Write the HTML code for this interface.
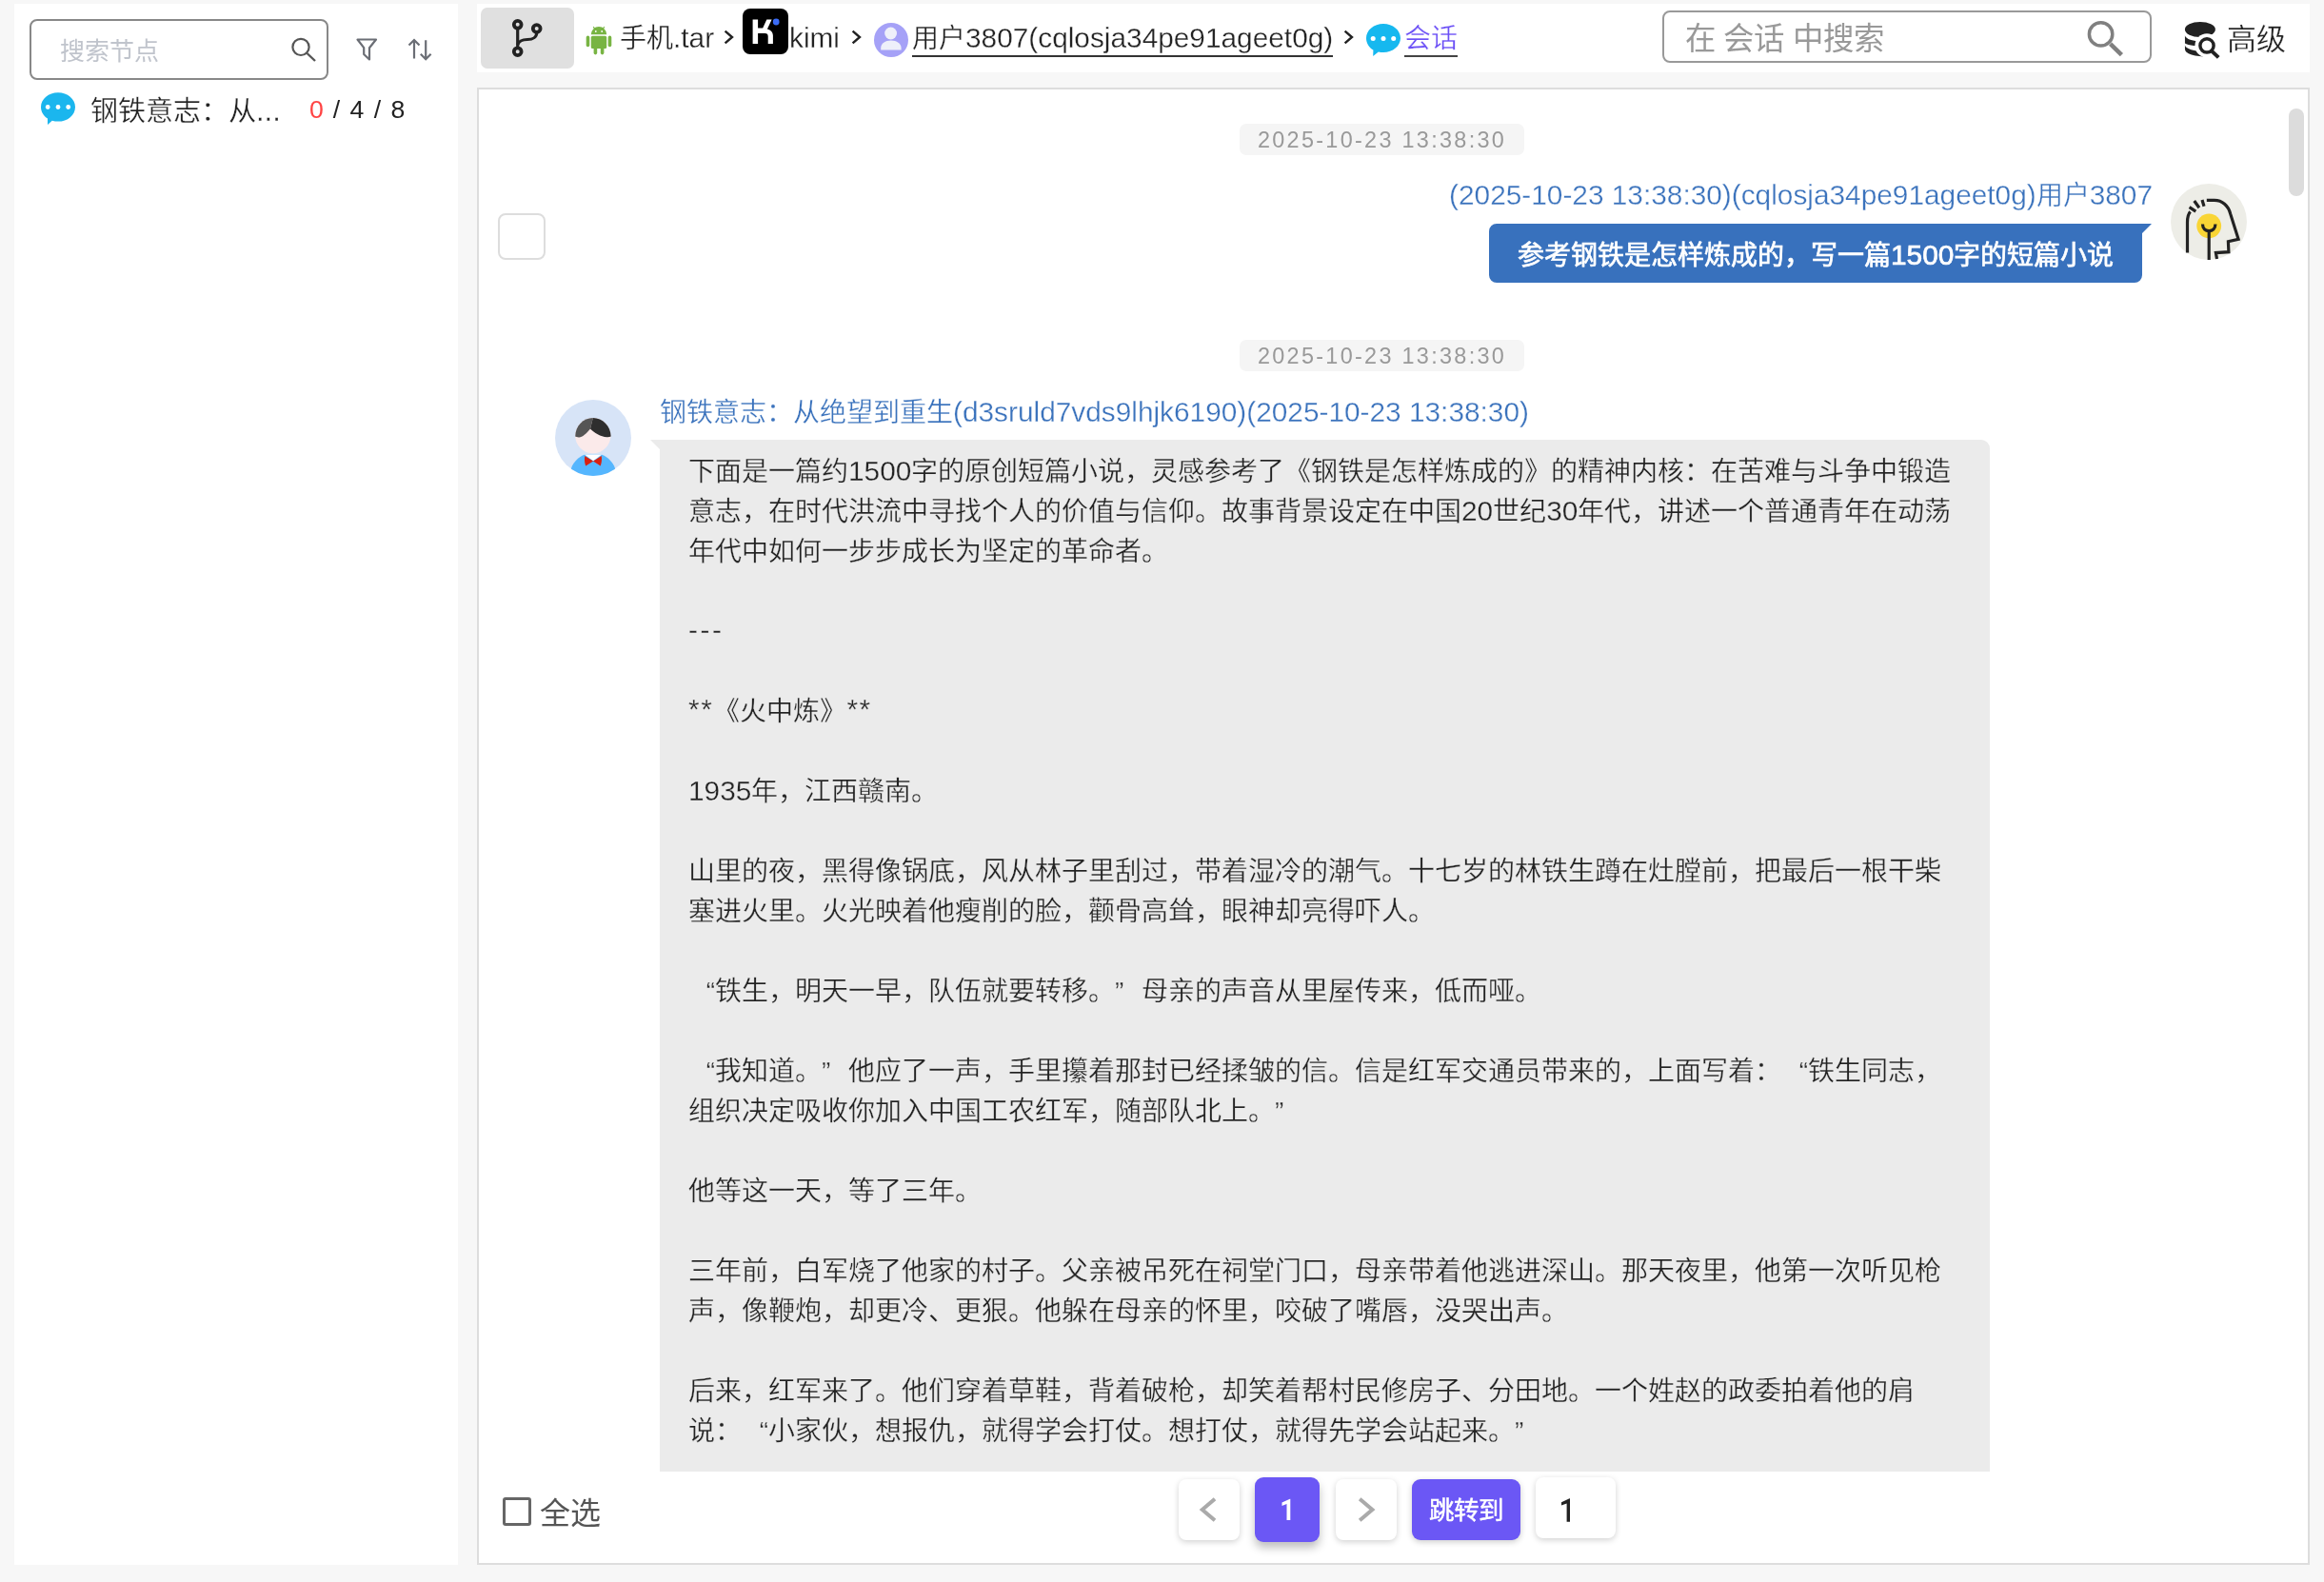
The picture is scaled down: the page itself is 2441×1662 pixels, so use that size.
<!DOCTYPE html>
<html lang="zh-CN">
<head>
<meta charset="utf-8">
<style>
*{box-sizing:border-box;margin:0;padding:0}
html,body{width:2441px;height:1662px;overflow:hidden}
body{will-change:transform}
body{background:#f7f7f7;font-family:"Liberation Sans",sans-serif;color:#222;position:relative}
.L{font-size:1.065em;line-height:0}
.P{font-size:1.065em;line-height:0}
.lq,.rq{display:inline-block;width:28px}.lq{text-align:right}.rq{text-align:left}
.a{position:absolute}
svg{display:block}
#left{left:15px;top:4px;width:466px;height:1640px;background:#fff}
#hdr{left:501px;top:4px;width:1925px;height:72px;background:#fff}
#chat{left:501px;top:92px;width:1925px;height:1552px;background:#fff;border:2px solid #ddd}
.sbox{left:31px;top:20px;width:314px;height:64px;border:2px solid #888;border-radius:8px;background:#fff}
.ph{color:#c0c4cc;font-size:26px;white-space:nowrap;line-height:30px}
.crumb{font-size:28px;white-space:nowrap;line-height:36px;color:#222;top:23px;-webkit-text-stroke:0.3px #fff}
.ts{left:1302px;width:299px;height:33px;background:#f5f5f5;border-radius:7px;color:#999;font-size:22px;letter-spacing:2.3px;text-align:center;line-height:35px;white-space:nowrap}
.blue{color:#3a72bc;-webkit-text-stroke:0.3px #fff}
.msg{font-size:28px;line-height:42px;white-space:pre;color:#222;-webkit-text-stroke:0.3px #ebebeb}
.pg{background:#fff;border-radius:8px;box-shadow:0 2px 6px rgba(0,0,0,.18)}
</style>
</head>
<body>
<!-- LEFT PANEL -->
<div id="left" class="a"></div>
<div class="a sbox"></div>
<div class="a ph" style="left:63px;top:39px">搜索节点</div>
<svg class="a" style="left:300px;top:34px" width="40" height="40" viewBox="0 0 40 40">
  <circle cx="16" cy="15.4" r="8.6" fill="none" stroke="#555" stroke-width="2.2"/>
  <line x1="22.5" y1="22" x2="31" y2="30" stroke="#555" stroke-width="2.4"/>
</svg>
<svg class="a" style="left:370px;top:36px" width="30" height="32" viewBox="0 0 30 32">
  <path d="M5.5 5.5 H25 L18 14.2 V26.5 L12.2 21 V14.2 Z" fill="none" stroke="#6b6e75" stroke-width="2.2" stroke-linejoin="round"/>
</svg>
<svg class="a" style="left:424px;top:36px" width="34" height="32" viewBox="0 0 34 32">
  <path d="M11 25.6 V6.2 M5.5 11.5 L11 6 L16.5 11.5" fill="none" stroke="#6b6e75" stroke-width="2.2"/>
  <path d="M23.2 6.3 V26.2 M17.8 20.8 L23.2 26.3 L28.6 20.8" fill="none" stroke="#6b6e75" stroke-width="2.2"/>
</svg>
<svg class="a" style="left:43px;top:97px" width="36" height="35" viewBox="0 0 36 35">
  <path d="M18 0.2 C28 0.2 36 6.9 36 15.4 C36 23.9 28 30.6 18 30.6 C15.8 30.6 13.8 30.3 11.8 29.7 L7 34 L7 27.5 C2.7 24.7 0 20.3 0 15.4 C0 6.9 8 0.2 18 0.2 Z" fill="#1bb6ee"/>
  <circle cx="7.2" cy="15.5" r="2.4" fill="#fff"/><circle cx="18" cy="15.5" r="2.4" fill="#fff"/><circle cx="28.7" cy="15.5" r="2.4" fill="#fff"/>
</svg>
<div class="a" style="left:95px;top:99px;font-size:29px;line-height:36px;white-space:nowrap;color:#222;-webkit-text-stroke:0.3px #fff">钢铁意志：从<span class="L">...</span></div>
<div class="a" style="left:325px;top:97px;font-size:25px;line-height:36px;word-spacing:3px;white-space:nowrap;color:#222"><span style="color:#f44"><span class="L">0</span></span> <span class="L">/ 4 / 8</span></div>

<!-- HEADER -->
<div id="hdr" class="a"></div>
<div class="a" style="left:505px;top:8px;width:98px;height:64px;background:#e0e0e0;border-radius:7px"></div>
<svg class="a" style="left:505px;top:8px" width="98" height="64" viewBox="0 0 98 64">
  <g fill="none" stroke="#222" stroke-width="3.2">
  <circle cx="38.7" cy="17.8" r="3.9" stroke-width="3.8"/><circle cx="58.7" cy="22" r="3.9" stroke-width="3.8"/><circle cx="38.7" cy="46.2" r="3.9" stroke-width="3.8"/>
  <path d="M38.7 22.2 V41.8"/>
  <path d="M38.7 39 C40 35 44 33.5 49 33.5 C55 33.5 58.7 30.5 58.7 26.4"/>
  </g>
</svg>

<svg class="a" style="left:615px;top:26px" width="28" height="32" viewBox="0 0 28 32">
  <g fill="#78b443">
  <path d="M5.8 10.2 A8.2 8.2 0 0 1 22.2 10.2 Z"/>
  <rect x="5.8" y="11.8" width="16.4" height="13.2" rx="1.6"/>
  <rect x="0.7" y="11.6" width="3.6" height="11.6" rx="1.8"/>
  <rect x="23.7" y="11.6" width="3.6" height="11.6" rx="1.8"/>
  <rect x="8.6" y="22" width="3.6" height="9.4" rx="1.8"/>
  <rect x="15.8" y="22" width="3.6" height="9.4" rx="1.8"/>
  <path d="M8.2 2.2 L10.2 4.8 M19.8 2.2 L17.8 4.8" stroke="#78b443" stroke-width="1.1"/>
  </g>
  <circle cx="10.8" cy="7" r="0.9" fill="#fff"/><circle cx="17.2" cy="7" r="0.9" fill="#fff"/>
</svg>
<div class="a crumb" style="left:651px">手机<span class="L">.tar</span></div>
<svg class="a" style="left:755px;top:28px" width="20" height="24" viewBox="0 0 20 24"><path d="M6.6 4.6 L14 11 L6.6 17.4" fill="none" stroke="#222" stroke-width="2.4"/></svg>
<svg class="a" style="left:780px;top:9px" width="48" height="48" viewBox="0 0 48 48">
  <rect width="48" height="48" rx="8" fill="#000"/>
  <path d="M10.6 11.6 H16.1 V20.6 H21.2 L25.3 11.6 H30.6 L25.9 21.4 C29.6 22.2 31.9 24.8 31.9 28.6 V36.9 H26.7 V29.2 C26.7 27.2 25.6 26.1 23.5 26.1 H16.1 V36.9 H10.6 Z" fill="#fff"/>
  <circle cx="35.2" cy="14" r="3.4" fill="#3b6cf6"/>
</svg>
<div class="a crumb" style="left:829px"><span class="L">kimi</span></div>
<svg class="a" style="left:889px;top:28px" width="20" height="24" viewBox="0 0 20 24"><path d="M6.6 4.6 L14 11 L6.6 17.4" fill="none" stroke="#222" stroke-width="2.4"/></svg>
<svg class="a" style="left:918px;top:24px" width="36" height="36" viewBox="0 0 36 36">
  <circle cx="18" cy="18" r="18" fill="#a5a1f7"/>
  <circle cx="17.6" cy="11" r="6.4" fill="#eef0fa"/>
  <path d="M7.2 28.4 V26.5 C7.2 21.5 11.8 18.4 17.8 18.4 C23.8 18.4 28.6 21.5 28.6 26.5 V28.4 Z" fill="#eef0fa"/>
</svg>
<div class="a crumb" style="left:958px;border-bottom:2px solid #333;line-height:35px">用户<span class="L">3807(cqlosja34pe91ageet0g)</span></div>
<svg class="a" style="left:1406px;top:28px" width="20" height="24" viewBox="0 0 20 24"><path d="M6.6 4.6 L14 11 L6.6 17.4" fill="none" stroke="#222" stroke-width="2.4"/></svg>
<svg class="a" style="left:1435px;top:25px" width="36" height="35" viewBox="0 0 36 35">
  <path d="M18 0 C28 0 36 6.7 36 15 C36 23.3 28 30 18 30 C16.2 30 14.5 29.8 12.8 29.4 L7.2 34 L7.4 27.5 C2.8 24.8 0 20.2 0 15 C0 6.7 8 0 18 0 Z" fill="#16b8ef"/>
  <circle cx="7.2" cy="15.4" r="2.5" fill="#fff"/><circle cx="18" cy="15.4" r="2.5" fill="#fff"/><circle cx="28.7" cy="15.4" r="2.5" fill="#fff"/>
</svg>
<div class="a crumb" style="left:1475px;color:#6b4ff6;border-bottom:2px solid #444;line-height:35px">会话</div>
<div class="a" style="left:1746px;top:11px;width:514px;height:55px;border:2px solid #999;border-radius:8px"></div>
<div class="a" style="left:1769.5px;top:21.5px;font-size:32.4px;line-height:38px;color:#999;white-space:nowrap">在 会话 中搜索</div>
<svg class="a" style="left:2186px;top:16px" width="50" height="50" viewBox="0 0 50 50">
  <circle cx="20.6" cy="19.9" r="12.2" fill="none" stroke="#808080" stroke-width="3.5"/>
  <path d="M30.6 30.2 L42.4 41.6" stroke="#808080" stroke-width="4.6"/>
</svg>
<svg class="a" style="left:2292px;top:20px" width="44" height="44" viewBox="0 0 44 44">
  <g fill="#222">
  <ellipse cx="18.9" cy="11" rx="16" ry="8"/>
  <path d="M2.95 16.9 C3.2 19.6 7.5 22 14 22.9 L22 23.8 L22 28.6 L12.3 27.9 C8 27.5 4.5 26.8 2.95 25.6 Z"/>
  <path d="M2.95 27.3 C3.2 30 7.5 32.2 14 33.2 L22 34.2 L22 39.4 L18.2 39 C12 38.6 7 37 4.2 34.6 C3.3 33.6 2.95 32.6 2.95 31.6 Z"/>
  </g>
  <circle cx="26" cy="27.9" r="12.6" fill="#fff"/>
  <circle cx="26" cy="27.9" r="7.1" fill="none" stroke="#222" stroke-width="3.45"/>
  <path d="M30.8 33.4 L38.2 40.4" stroke="#222" stroke-width="3.9"/>
</svg>
<div class="a" style="left:2339px;top:24px;font-size:31px;line-height:36px;white-space:nowrap;color:#222;-webkit-text-stroke:0.3px #fff">高级</div>

<!-- CHAT -->
<div id="chat" class="a"></div>
<div class="a" style="left:2404px;top:114px;width:16px;height:92px;border-radius:8px;background:#dcdcdc"></div>
<div class="a ts" style="top:130px"><span class="L">2025-10-23 13:38:30</span></div>
<div class="a" style="left:523px;top:224px;width:50px;height:49px;border:2px solid #ddd;border-radius:8px"></div>
<div class="a blue" style="right:180px;top:188px;font-size:28px;line-height:36px;white-space:nowrap"><span class="L">(2025-10-23 13:38:30)(cqlosja34pe91ageet0g)</span>用户<span class="L">3807</span></div>
<svg class="a" style="left:1564px;top:235px" width="697" height="62" viewBox="0 0 697 62">
  <path d="M8 0 H696 L686 10 V54 A8 8 0 0 1 678 62 H8 A8 8 0 0 1 0 54 V8 A8 8 0 0 1 8 0 Z" fill="#3871bd"/>
</svg>
<div class="a" style="left:1594px;top:248px;font-size:28px;line-height:42px;color:#fff;white-space:nowrap;-webkit-text-stroke:0.7px #fff">参考钢铁是怎样炼成的，写一篇<span class="L">1500</span>字的短篇小说</div>
<svg class="a" style="left:2280px;top:193px" width="80" height="80" viewBox="0 0 80 80">
  <circle cx="40" cy="40" r="40" fill="#ededE7"/>
  <circle cx="40.2" cy="44.3" r="12.9" fill="#f9d535"/>
  <g fill="none" stroke="#222" stroke-width="3.2" stroke-linecap="butt">
  <path d="M33.5 42.6 C33.5 47 36.5 49.6 40.2 49.6 C43.9 49.6 46.9 47 46.9 42.6"/>
  <path d="M40.2 49.6 V80"/>
  <path d="M17.5 72.6 V40.5 C17.5 35 18.5 31.5 20.6 29.3"/>
  <path d="M37.8 17.4 H45.9 C54 17.4 60.5 23 62.6 31.4 L71.1 58.3 L60.4 60.8 L60.9 71.7 L47.4 72.6 L48.5 79"/>
  <path d="M19.6 24.7 L26.3 29.1 M24.7 18 L29.9 25.2 M33 17 L35 23.7"/>
  </g>
</svg>
<div class="a ts" style="top:357px"><span class="L">2025-10-23 13:38:30</span></div>
<svg class="a" style="left:583px;top:420px" width="80" height="80" viewBox="0 0 80 80">
  <defs><clipPath id="cc"><circle cx="40" cy="40" r="40"/></clipPath></defs>
  <circle cx="40" cy="40" r="40" fill="#d7e4f7"/>
  <g clip-path="url(#cc)">
  <path d="M17 80 V72 C19.5 65 25 60 31.3 57.6 H48.7 C55 60 60.5 65 63 72 V80 Z" fill="#55b6fe"/>
  <path d="M30.8 57.4 H49.2 L40.1 64.2 Z" fill="#fff"/>
  </g>
  <circle cx="39.8" cy="37.6" r="18.7" fill="#fbeaea"/>
  <path d="M21.2 38.6 C21.3 27.5 29.5 19 39.8 19 L37 30.5 C33 35.5 28.5 39.5 25 39.4 C23.2 39.3 21.9 39.1 21.2 38.6 Z" fill="#555"/>
  <path d="M39.8 19 C50 19 58.5 27.5 58.7 38.6 C57.5 39.2 56 39.4 54.5 39.3 C48 39 41 34.5 37 30.5 Z" fill="#2e2e2e"/>
  <path d="M31.3 59.1 L40.1 64.5 L32.2 69.5 C30.8 66 30.7 62.2 31.3 59.1 Z" fill="#d92010"/>
  <path d="M48.7 59.1 L40.1 64.5 L47.7 69.5 C49.1 66 49.3 62.2 48.7 59.1 Z" fill="#d92010"/>
</svg>
<div class="a blue" style="left:693px;top:416px;font-size:28px;line-height:36px;white-space:nowrap">钢铁意志：从绝望到重生<span class="L">(d3sruld7vds9lhjk6190)(2025-10-23 13:38:30)</span></div>
<div class="a" style="left:503px;top:94px;width:1900px;height:1452px;overflow:hidden">
  <svg class="a" style="left:180px;top:368px" width="1408" height="1200" viewBox="0 0 1408 1200">
    <path d="M0 0 H1398 A9 9 0 0 1 1407 9 V1200 H10 V10 Z" fill="#ebebeb"/>
  </svg>
  <div class="a msg" style="left:220px;top:381px">下面是一篇约<span class="L">1500</span>字的原创短篇小说，灵感参考了《钢铁是怎样炼成的》的精神内核：在苦难与斗争中锻造
意志，在时代洪流中寻找个人的价值与信仰。故事背景设定在中国<span class="L">20</span>世纪<span class="L">30</span>年代，讲述一个普通青年在动荡
年代中如何一步步成长为坚定的革命者。

<span class="P" style="letter-spacing:2.6px;position:relative;top:-1px">---</span>

<span class="P" style="letter-spacing:1.6px;position:relative;top:-2px">**</span>《火中炼》<span class="P" style="letter-spacing:1.6px;position:relative;top:-2px">**</span>

<span class="L">1935</span>年，江西赣南。

山里的夜，黑得像锅底，风从林子里刮过，带着湿冷的潮气。十七岁的林铁生蹲在灶膛前，把最后一根干柴
塞进火里。火光映着他瘦削的脸，颧骨高耸，眼神却亮得吓人。

<span class="lq">“</span>铁生，明天一早，队伍就要转移。<span class="rq">”</span>母亲的声音从里屋传来，低而哑。

<span class="lq">“</span>我知道。<span class="rq">”</span>他应了一声，手里攥着那封已经揉皱的信。信是红军交通员带来的，上面写着：<span class="lq">“</span>铁生同志，
组织决定吸收你加入中国工农红军，随部队北上。<span class="rq">”</span>

他等这一天，等了三年。

三年前，白军烧了他家的村子。父亲被吊死在祠堂门口，母亲带着他逃进深山。那天夜里，他第一次听见枪
声，像鞭炮，却更冷、更狠。他躲在母亲的怀里，咬破了嘴唇，没哭出声。

后来，红军来了。他们穿着草鞋，背着破枪，却笑着帮村民修房子、分田地。一个姓赵的政委拍着他的肩
说：<span class="lq">“</span>小家伙，想报仇，就得学会打仗。想打仗，就得先学会站起来。<span class="rq">”</span>

</div>
</div>
<!-- FOOTER -->
<div class="a" style="left:528px;top:1573px;width:30px;height:30px;border:3px solid #666;border-radius:3px"></div>
<div class="a" style="left:567px;top:1571px;font-size:32px;line-height:38px;color:#555;white-space:nowrap">全选</div>
<div class="a pg" style="left:1238px;top:1554px;width:64px;height:64px"></div>
<svg class="a" style="left:1238px;top:1554px" width="64" height="64" viewBox="0 0 64 64"><path d="M38 20.8 L24.8 32 L38 43.2" fill="none" stroke="#aaa" stroke-width="4"/></svg>
<div class="a" style="left:1318px;top:1552px;width:68px;height:68px;background:#6b57f5;border-radius:9px;box-shadow:0 6px 10px rgba(0,0,0,.25)"></div>
<svg class="a" style="left:1318px;top:1552px" width="68" height="68" viewBox="0 0 68 68"><path d="M37.3 22.8 V45 H33.5 V27.9 L28.5 30 V26.6 L36.8 22.8 Z" fill="#fff"/></svg>
<div class="a pg" style="left:1403px;top:1554px;width:64px;height:64px"></div>
<svg class="a" style="left:1403px;top:1554px" width="64" height="64" viewBox="0 0 64 64"><path d="M25.2 20.8 L38.4 32 L25.2 43.2" fill="none" stroke="#aaa" stroke-width="4"/></svg>
<div class="a" style="left:1483px;top:1554px;width:114px;height:64px;background:#6b57f5;border-radius:9px;box-shadow:0 2px 6px rgba(0,0,0,.2)"></div>
<div class="a" style="left:1483px;top:1554px;width:114px;height:64px;color:#fff;font-size:26.5px;line-height:66px;text-align:center;white-space:nowrap;-webkit-text-stroke:0.5px #fff">跳转到</div>
<div class="a pg" style="left:1613px;top:1552px;width:84px;height:64px"></div>
<svg class="a" style="left:1613px;top:1552px" width="84" height="64" viewBox="0 0 84 64"><path d="M36 22.2 V46.8 H32.6 V27.4 L27 29.5 V26.3 L35.5 22.2 Z" fill="#222"/></svg>
</body>
</html>
